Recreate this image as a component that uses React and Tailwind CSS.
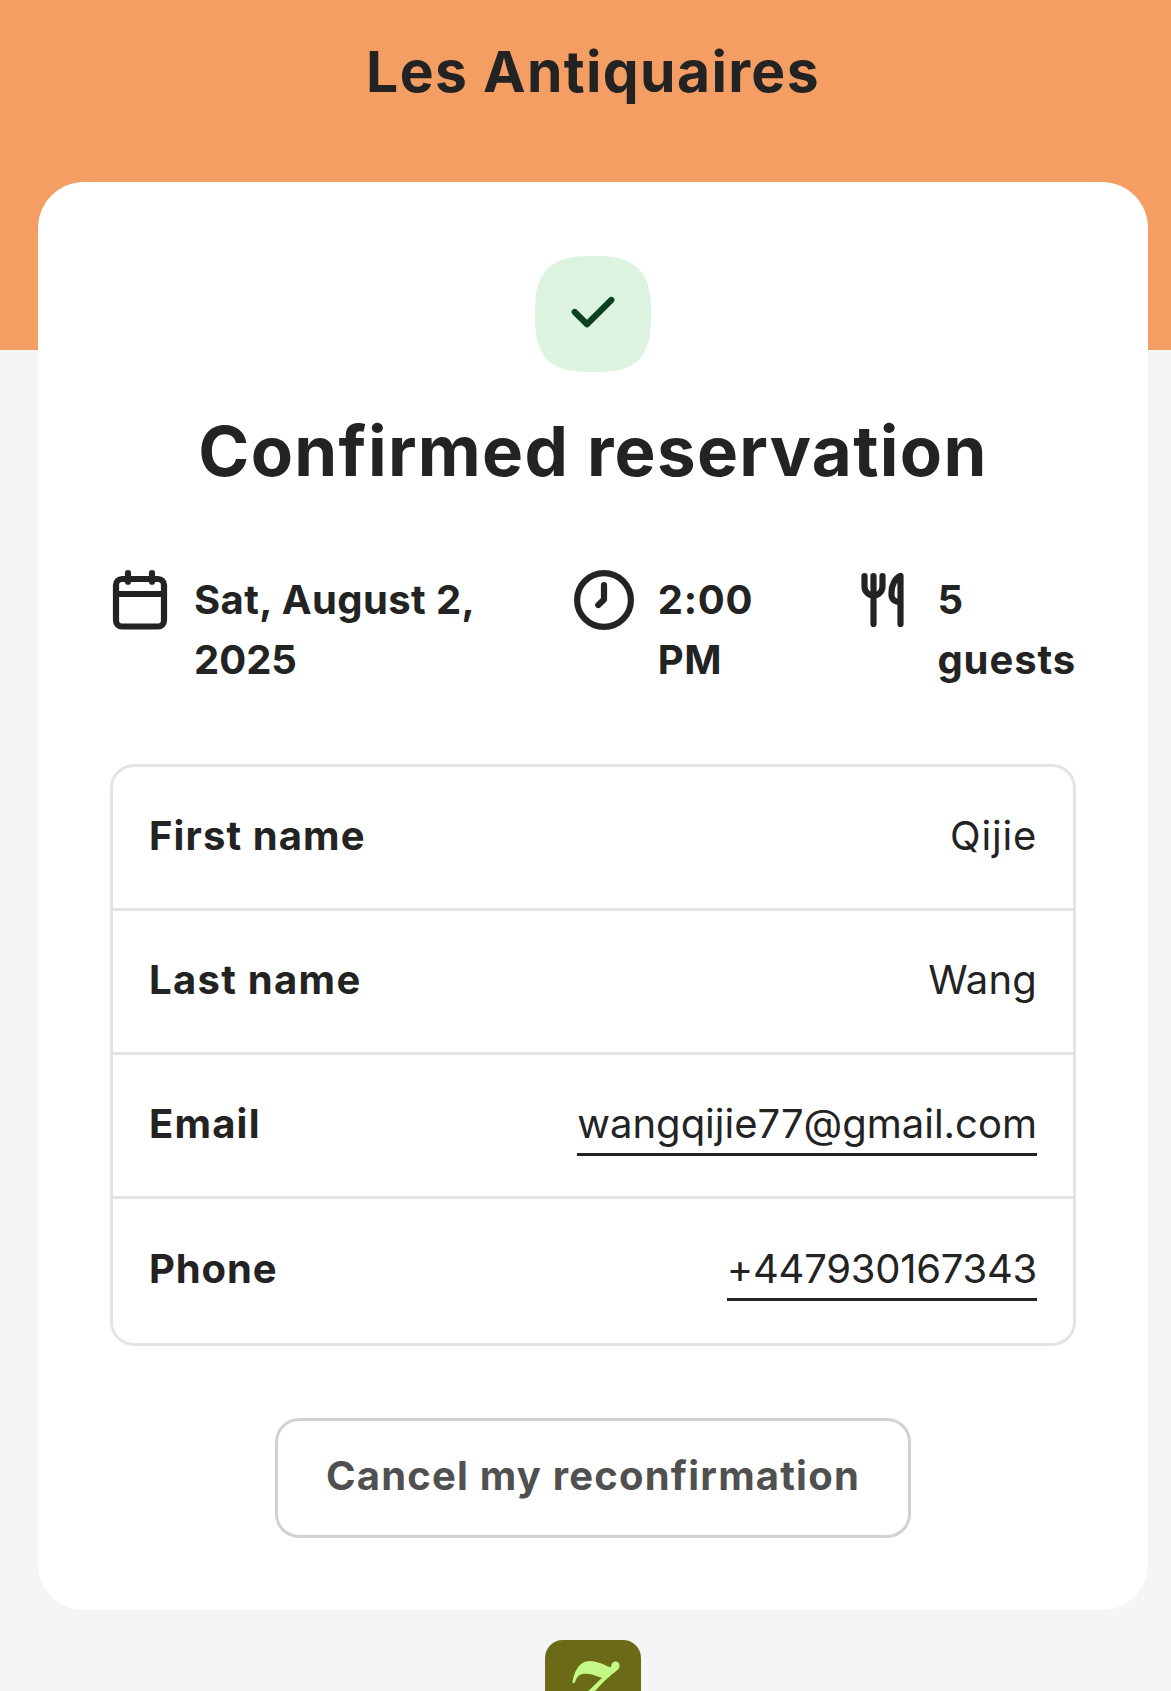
function CheckBadge() {
  return (
    <svg viewBox="0 0 116 116" className="size-[116px]" fill="none">
      <path d="M0 58C0 40 1 26 12 13 25 1 40 0 58 0s33 1 46 13c11 13 12 27 12 45s-1 33-12 46c-13 11-28 12-46 12s-33-1-46-12C1 91 0 76 0 58Z" fill="#dcf4df" />
      <path d="M39.7 56 52 68.3 76.300 44" stroke="#0c4120" strokeWidth="6.2" strokeLinecap="round" strokeLinejoin="round" />
    </svg>
  );
}

function Icon({ children }) {
  return (
    <svg viewBox="0 0 60 60" className="size-[60px] shrink-0" fill="none" stroke="currentColor" strokeWidth="6.2" strokeLinecap="round" strokeLinejoin="round">
      {children}
    </svg>
  );
}

function Meta({ icon, children, className = '' }) {
  return (
    <div className={`flex items-start gap-6 text-[40px] leading-[60px] font-[650] ${className}`}>
      <Icon>{icon}</Icon>
      <div>{children}</div>
    </div>
  );
}

const rows = [
  { label: 'First name', value: 'Qijie', labelClass: 'tracking-[1.1px]', valueClass: 'tracking-[0.8px]' },
  { label: 'Last name', value: 'Wang', labelClass: 'tracking-[1.3px]', valueClass: 'tracking-[0.2px]' },
  { label: 'Email', value: 'wangqijie77@gmail.com', labelClass: 'tracking-[1.2px]', valueClass: 'tracking-[0px]', link: true },
  { label: 'Phone', value: '+447930167343', labelClass: 'tracking-[0.9px]', valueClass: 'tracking-[-0.25px]', link: true },
];

export default function App() {
  return (
    <div className="h-[1691px] w-full overflow-hidden bg-[#f5f5f5] font-['Inter',sans-serif] text-[#232323]">
      <header className="h-[350px] bg-[#f49e64] pt-[36px] pl-[15px] text-center">
        <h1 className="text-[57px] leading-[72px] font-bold tracking-[1.35px]">Les Antiquaires</h1>
      </header>

      <main className="relative mr-[23px] -mt-[168px] ml-[38px] flex h-[1428px] flex-col items-center rounded-[46px] bg-white pt-[74px]">
        <CheckBadge />
        <h2 className="mt-[37px] text-[69px] leading-[84px] font-bold tracking-[1.3px]">Confirmed reservation</h2>

        <section className="mt-[77px] flex w-[966px]">
          <Meta
            className="w-[464px]"
            icon={
              <>
                <rect x="6" y="9" width="48" height="47.5" rx="6" />
                <path d="M6 24h48M18 3.200v8.500M42 3.200v8.500" />
              </>
            }
          >
            <div className="tracking-[0.4px]">Sat, August 2,</div>
            <div className="tracking-[0px]">2025</div>
          </Meta>
          <Meta
            className="w-[280px]"
            icon={
              <>
                <circle cx="30" cy="30" r="26.900" />
                <path d="M30 15v14.500L24.300 35" />
              </>
            }
          >
            <div className="tracking-[0.8px]">2:00</div>
            <div className="tracking-[0.8px]">PM</div>
          </Meta>
          <Meta
            icon={<path d="M11.500 6v10.500a9 9 0 0 0 18 0V6M20.500 6v48M47.500 6v48M47.500 6C42 8 38.500 15.500 38.500 22.500v2.500c0 4.500 4 7.500 9 7.200" />}
          >
            <div>5</div>
            <div className="tracking-[0.9px]">guests</div>
          </Meta>
        </section>

        <dl className="mt-[74px] h-[582px] w-[966px] rounded-3xl border-[3px] border-[#e4e4e4] text-[40px] leading-[60px]">
          {rows.map((r) => (
            <div key={r.label} className="flex h-[144px] items-center justify-between border-b-[3px] border-[#e4e4e4] px-[36px] pb-1 last:border-b-0 last:pb-[5px]">
              <dt className={`font-bold ${r.labelClass}`}>{r.label}</dt>
              <dd className={r.valueClass}>
                {r.link ? <a className="-mb-[2px] block h-[62px] border-b-[3px] border-[#232323]">{r.value}</a> : r.value}
              </dd>
            </div>
          ))}
        </dl>

        <button className="mt-[72px] h-[120px] w-[636px] rounded-3xl border-[3px] border-[#d2d2d2] pb-[5px] text-[40px] leading-[60px] font-bold tracking-[1.2px] text-[#505050]">
          Cancel my reconfirmation
        </button>
      </main>

      <footer className="mt-[30px] mr-[23px] ml-[38px] flex justify-center">
        <svg viewBox="0 0 96 96" className="size-24" fill="none">
          <rect width="96" height="96" rx="18" fill="#6b6a17" />
          <path d="M27.500 42.500C29 32 34 21 45 21c7.500 0 14 4 21 6.500 0-3.500 2-6.500 5-6 4.500.5 4.500 6 1.500 8.500C66 35 60 40 50 51L38 64h-8L57 37.700c-5-1-9-4-16-4-6 0-9 2-11 8.500-1 1.300-2.300 1.300-2.500.3Z" fill="#c4f985" />
        </svg>
      </footer>
    </div>
  );
}
